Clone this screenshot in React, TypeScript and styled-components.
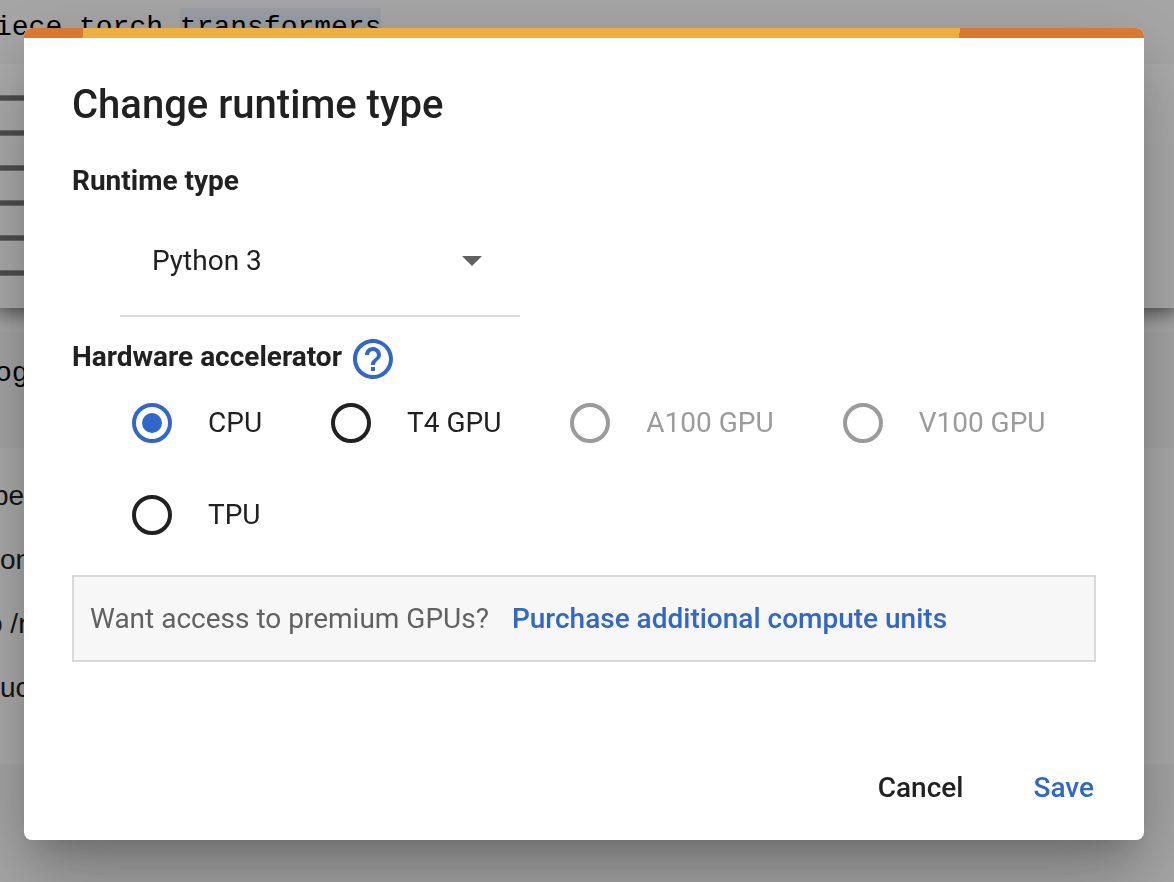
import React, { useState } from 'react';
import styled, { createGlobalStyle } from 'styled-components';

const GlobalStyle = createGlobalStyle`
  *, *::before, *::after {
    box-sizing: border-box;
  }

  html, body, #root {
    height: 100%;
  }

  body {
    margin: 0;
    overflow: hidden;
    background: #f7f7f7;
    color: #212121;
    font-family: Roboto, "Liberation Sans", sans-serif;
    font-size: 28px;
    line-height: 32px;
  }
`;

/* Notebook behind the dialog */

const Notebook = styled.main`
  min-height: 100%;
  overflow: hidden;
  white-space: pre;
`;

const CodeCell = styled.pre<{ $height: number; $top: number }>`
  margin: 0;
  height: ${({ $height }) => $height}px;
  padding-top: ${({ $top }) => $top}px;
  background: #f7f7f7;
  color: #000;
  font-family: "Liberation Mono", monospace;
  font-size: 28px;
  line-height: 32px;
`;

const CodeText = styled.code<{ $scroll: number }>`
  display: block;
  margin-left: -${({ $scroll }) => $scroll}px;
  font-family: inherit;
`;

const Highlight = styled.mark`
  padding-top: 4px;
  background: #e4edf4;
  color: inherit;
`;

const Output = styled.section`
  position: relative;
  height: 244px;
  padding-top: 31px;
  background: #fff;
  box-shadow: 0 0 20px 4px rgba(0, 0, 0, 0.6);
  clip-path: inset(0 0 -24px 0);
`;

const OutputRule = styled.hr`
  height: 6px;
  margin: 0 40px 29px 0;
  border: 1px solid #a0a0a0;
  border-width: 1px 0;
  background: #747474;
`;

const Spacer = styled.div`
  height: 24px;
  background: #fff;
`;

const TextCell = styled.section`
  height: 316px;
  padding-top: 32px;
  background: #fff;
  font-family: "Liberation Sans", Arial, sans-serif;
`;

const TextLine = styled.p<{ $scroll: number }>`
  margin: 0 0 32px;
  text-indent: -${({ $scroll }) => $scroll}px;
`;

/* Dialog */

const Scrim = styled.div`
  position: fixed;
  inset: 0;
  display: flex;
  align-items: flex-start;
  padding: 28px 30px 42px 24px;
  background: rgba(0, 0, 0, 0.32);
`;

const DialogShadow = styled.div`
  flex: 1;
  min-width: 0;
  display: flex;
  border-radius: 8px;
  box-shadow:
    0 22px 30px -14px rgba(0, 0, 0, 0.2),
    0 48px 76px 6px rgba(0, 0, 0, 0.14),
    0 18px 92px 16px rgba(0, 0, 0, 0.12);
`;

const Dialog = styled.form`
  flex: 1;
  min-width: 0;
  overflow: hidden;
  border-radius: 8px;
  background: #fff;
`;

const ProgressStrip = styled.div`
  height: 10px;
  background: linear-gradient(
    96deg,
    #d9782f 5.3%,
    #eeaf3f 5.3%,
    #eeaf3f 83.5%,
    #d9782f 83.5%
  );
`;

const Content = styled.div`
  padding: 47px 48px 0;
`;

const Title = styled.h1`
  margin: 0;
  font-size: 40px;
  font-weight: 500;
  line-height: 40px;
`;

const FieldLabel = styled.label`
  display: block;
  margin: 40px 0 8px;
  font-weight: 700;
`;

const SelectField = styled.div`
  display: grid;
  align-items: center;
  width: 400px;
  max-width: 100%;
  margin-left: 48px;
  padding-top: 2px;
  border-bottom: 2px solid #dadada;

  > * {
    grid-area: 1 / 1;
  }
`;

const Select = styled.select`
  appearance: none;
  width: 100%;
  height: 108px;
  padding: 0 72px 0 32px;
  border: 0;
  outline: 0;
  background: transparent;
  color: #212121;
  font: inherit;
`;

const SelectArrow = styled.svg`
  justify-self: end;
  width: 20px;
  height: 10px;
  margin-right: 38px;
  pointer-events: none;
`;

const GroupHeading = styled.div`
  display: flex;
  align-items: flex-start;
  gap: 7px;
  margin: 18px 0 20px;
`;

const GroupTitle = styled.h2`
  margin: 0;
  font-size: 28px;
  font-weight: 700;
  line-height: 44px;
`;

const HelpLink = styled.a`
  display: block;
  height: 48px;
  color: #3166cd;

  svg {
    display: block;
    width: 48px;
    height: 48px;
  }
`;

const RadioGroup = styled.div`
  display: flex;
  flex-wrap: wrap;
  gap: 52px 69px;
  padding: 0 16px 0 60px;
`;

const RadioOption = styled.label<{ $disabled?: boolean }>`
  display: flex;
  align-items: center;
  gap: 36px;
  height: 40px;
  color: ${({ $disabled }) => ($disabled ? '#9b9b9b' : '#212121')};
`;

const Radio = styled.input`
  appearance: none;
  display: grid;
  place-items: center;
  width: 40px;
  height: 40px;
  margin: 0;
  border: 4px solid currentColor;
  border-radius: 50%;
  color: inherit;

  &:checked {
    color: #3166cd;
  }

  &:checked::before {
    content: '';
    width: 20px;
    height: 20px;
    border-radius: 50%;
    background: currentColor;
  }
`;

const Banner = styled.div`
  display: flex;
  align-items: center;
  gap: 23px;
  height: 87px;
  margin-top: 40px;
  padding: 1px 16px 0;
  border: 2px solid #dadada;
  background: #f7f7f7;
  color: #616161;
`;

const BannerLink = styled.a`
  color: #3166cd;
  font-weight: 500;
  text-decoration: none;
`;

const Actions = styled.div`
  display: flex;
  justify-content: flex-end;
  gap: 38px;
  margin-top: 90px;
  padding: 0 34px 16px;
`;

const ActionButton = styled.button<{ $primary?: boolean }>`
  height: 72px;
  padding: 0 16px;
  border: 0;
  background: transparent;
  color: ${({ $primary }) => ($primary ? '#3166cd' : '#212121')};
  font: inherit;
  font-weight: 500;
`;

const accelerators = [
  { id: 'CPU' },
  { id: 'T4 GPU' },
  { id: 'A100 GPU', disabled: true },
  { id: 'V100 GPU', disabled: true },
  { id: 'TPU' },
];

const textLines = [
  { text: 'pe', scroll: 7 },
  { text: 'on', scroll: 0 },
  { text: 'o /r', scroll: 13 },
  { text: 'uc', scroll: 0 },
];

export default function App() {
  const [accelerator, setAccelerator] = useState('CPU');

  return (
    <>
      <GlobalStyle />
      <Notebook aria-hidden="true">
        <CodeCell $height={64} $top={12}>
          <CodeText $scroll={5}>
            iece torch <Highlight>transformers</Highlight>
          </CodeText>
        </CodeCell>
        <Output>
          {[0, 1, 2, 3, 4, 5].map((row) => (
            <OutputRule key={row} />
          ))}
        </Output>
        <Spacer />
        <CodeCell $height={116} $top={26}>
          <CodeText $scroll={5}>og</CodeText>
        </CodeCell>
        <TextCell>
          {textLines.map(({ text, scroll }) => (
            <TextLine key={text} $scroll={scroll}>
              {text}
            </TextLine>
          ))}
        </TextCell>
      </Notebook>

      <Scrim>
        <DialogShadow>
          <Dialog
            role="dialog"
            aria-modal="true"
            aria-labelledby="dialog-title"
            onSubmit={(event) => event.preventDefault()}
          >
            <ProgressStrip />
            <Content>
              <Title id="dialog-title">Change runtime type</Title>

              <FieldLabel htmlFor="runtime-type">Runtime type</FieldLabel>
              <SelectField>
                <Select id="runtime-type" defaultValue="Python 3">
                  <option>Python 3</option>
                </Select>
                <SelectArrow viewBox="0 0 20 10" aria-hidden="true">
                  <path d="M0 0h20L10 10z" fill="#616161" />
                </SelectArrow>
              </SelectField>

              <GroupHeading>
                <GroupTitle id="accelerator-title">Hardware accelerator</GroupTitle>
                <HelpLink href="#help" aria-label="Help">
                  <svg viewBox="0 0 24 24" fill="currentColor" aria-hidden="true">
                    <path d="M11 18h2v-2h-2v2zm1-16C6.48 2 2 6.48 2 12s4.48 10 10 10 10-4.48 10-10S17.52 2 12 2zm0 18c-4.41 0-8-3.59-8-8s3.59-8 8-8 8 3.59 8 8-3.59 8-8 8zm0-14c-2.21 0-4 1.79-4 4h2c0-1.1.9-2 2-2s2 .9 2 2c0 2-3 1.75-3 5h2c0-2.25 3-2.5 3-5 0-2.21-1.79-4-4-4z" />
                  </svg>
                </HelpLink>
              </GroupHeading>
              <RadioGroup role="radiogroup" aria-labelledby="accelerator-title">
                {accelerators.map(({ id, disabled }) => (
                  <RadioOption key={id} $disabled={disabled}>
                    <Radio
                      type="radio"
                      name="accelerator"
                      value={id}
                      checked={accelerator === id}
                      disabled={disabled}
                      onChange={() => setAccelerator(id)}
                    />
                    {id}
                  </RadioOption>
                ))}
              </RadioGroup>

              <Banner>
                <span>Want access to premium GPUs?</span>
                <BannerLink href="#purchase">Purchase additional compute units</BannerLink>
              </Banner>
            </Content>

            <Actions>
              <ActionButton type="button">Cancel</ActionButton>
              <ActionButton type="submit" $primary>
                Save
              </ActionButton>
            </Actions>
          </Dialog>
        </DialogShadow>
      </Scrim>
    </>
  );
}
